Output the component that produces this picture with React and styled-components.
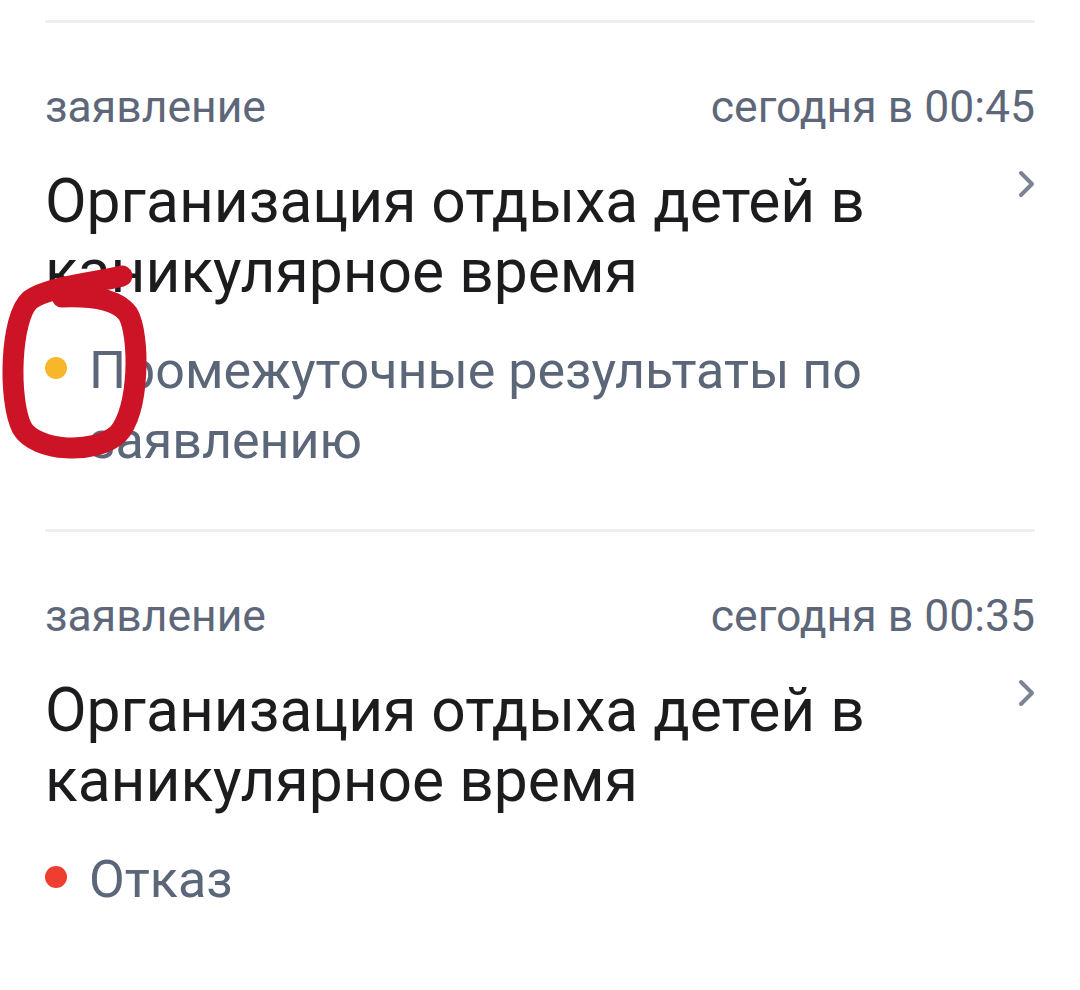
import React from 'react';
import styled, { createGlobalStyle } from 'styled-components';

const GlobalStyle = createGlobalStyle`
  body {
    margin: 0;
    background: #ffffff;
    font-family: Roboto, "Noto Sans", sans-serif;
  }
`;

const Page = styled.div`
  position: relative;
  width: 1080px;
  height: 990px;
  overflow: hidden;
  background: #ffffff;
`;

const List = styled.div`
  display: flex;
  flex-direction: column;
  padding: 20px 45px 0;
`;

const Item = styled.div`
  display: flex;
  flex-direction: column;
  border-top: 3px solid #efefef;
  padding: 56px 0 53px;
`;

const Meta = styled.div`
  display: flex;
  justify-content: space-between;
  font-size: 44.5px;
  line-height: 56px;
  color: #5d6779;
`;

const TitleRow = styled.div`
  display: flex;
  justify-content: space-between;
  align-items: flex-start;
  margin-top: 32px;
`;

const Title = styled.div`
  font-size: 60.5px;
  line-height: 70px;
  color: #1c1c1e;
  max-width: 880px;
`;

const Chevron = styled.svg`
  width: 20px;
  height: 30px;
  margin-top: 2px;
  margin-right: -2px;
  flex-shrink: 0;
`;

const Status = styled.div`
  display: flex;
  align-items: flex-start;
  margin-top: 29px;
`;

const Dot = styled.span`
  width: 22px;
  height: 22px;
  border-radius: 50%;
  background: ${(p) => p.color};
  flex-shrink: 0;
  margin: 21px 22px 0 0;
`;

const StatusText = styled.div`
  font-size: 52px;
  line-height: 70px;
  color: #5c6679;
`;

const Scribble = styled.svg`
  position: absolute;
  left: 0;
  top: 0;
  width: 1080px;
  height: 990px;
  pointer-events: none;
`;

const items = [
  {
    time: 'сегодня в 00:45',
    title: 'Организация отдыха детей в каникулярное время',
    status: 'Промежуточные результаты по заявлению',
    dot: '#f7b62b',
  },
  {
    time: 'сегодня в 00:35',
    title: 'Организация отдыха детей в каникулярное время',
    status: 'Отказ',
    dot: '#ee3e30',
  },
];

export default function App() {
  return (
    <Page>
      <GlobalStyle />
      <List>
        {items.map((it, i) => (
          <Item key={i}>
            <Meta>
              <span>заявление</span>
              <span>{it.time}</span>
            </Meta>
            <TitleRow>
              <Title>{it.title}</Title>
              <Chevron viewBox="0 0 20 30">
                <path d="M4 4 L15 15 L4 26" fill="none" stroke="#7b8494" strokeWidth="4" strokeLinecap="round" strokeLinejoin="round" />
              </Chevron>
            </TitleRow>
            <Status>
              <Dot color={it.dot} />
              <StatusText>{it.status}</StatusText>
            </Status>
          </Item>
        ))}
      </List>
      <Scribble viewBox="0 0 1080 990">
        <path
          d="M122 276 C95 283 50 286 30 300 C10 318 8 400 22 428 C36 452 95 455 118 434 C140 410 140 335 128 314 C116 298 90 296 62 297"
          fill="none"
          stroke="#cc1426"
          strokeWidth="21"
          strokeLinecap="round"
          strokeLinejoin="round"
        />
      </Scribble>
    </Page>
  );
}
